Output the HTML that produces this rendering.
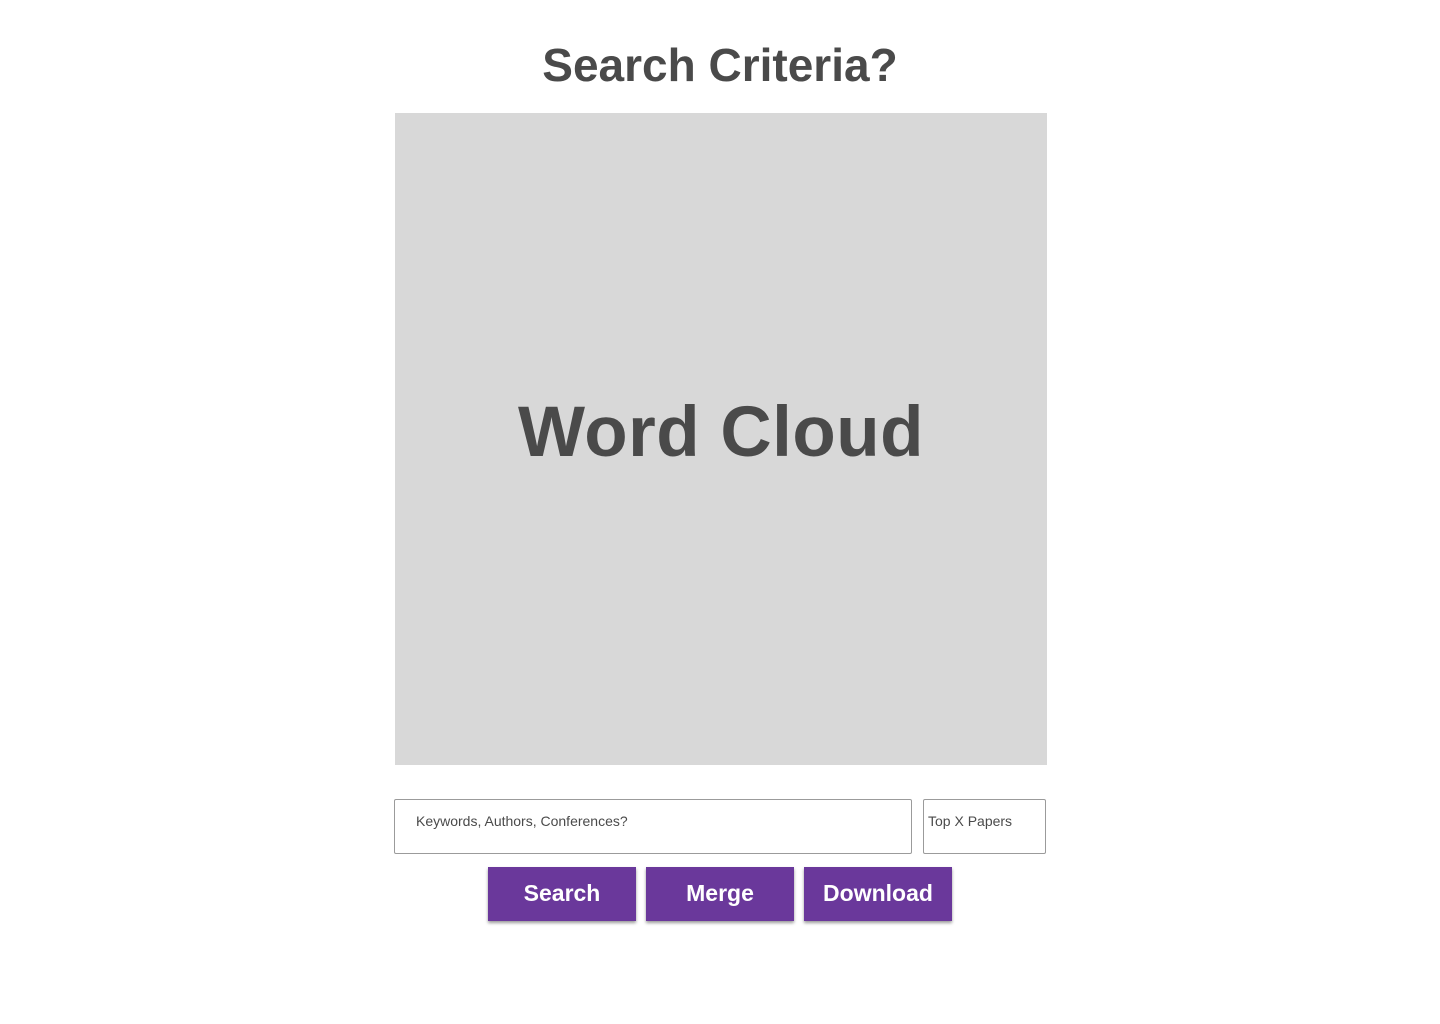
<!DOCTYPE html>
<html><head><style>
body{margin:0;width:1440px;height:1024px;background:#fff;position:relative;font-family:"Liberation Sans",sans-serif;overflow:hidden}
.t{position:absolute;left:0;width:1440px;top:37px;text-align:center;font-size:46px;font-weight:bold;color:#4a4a4a;line-height:56px}
.wc{position:absolute;left:395px;top:113px;width:652px;height:652px;background:#d8d8d8}
.wc span{position:absolute;left:0;right:0;top:278px;text-align:center;font-size:71px;font-weight:bold;color:#4a4a4a;line-height:84px;letter-spacing:0.5px}
.in{position:absolute;top:799px;height:53px;border:1px solid #9b9b9b;border-radius:2px;box-sizing:border-box;font-size:14px;color:#4a4a4a}
.b{position:absolute;top:867px;width:148px;height:54px;background:#6a389b;color:#fff;font-size:23px;font-weight:bold;text-align:center;line-height:52px;box-shadow:0 2px 3px rgba(0,0,0,.4)}
</style></head><body>
<div class="t">Search Criteria?</div>
<div class="wc"><span>Word Cloud</span></div>
<div class="in" style="left:394px;width:518px;height:55px;padding:13px 0 0 21px">Keywords, Authors, Conferences?</div>
<div class="in" style="left:923px;width:123px;height:55px;padding:13px 0 0 4px">Top X Papers</div>
<div class="b" style="left:488px">Search</div>
<div class="b" style="left:646px">Merge</div>
<div class="b" style="left:804px">Download</div>
</body></html>
